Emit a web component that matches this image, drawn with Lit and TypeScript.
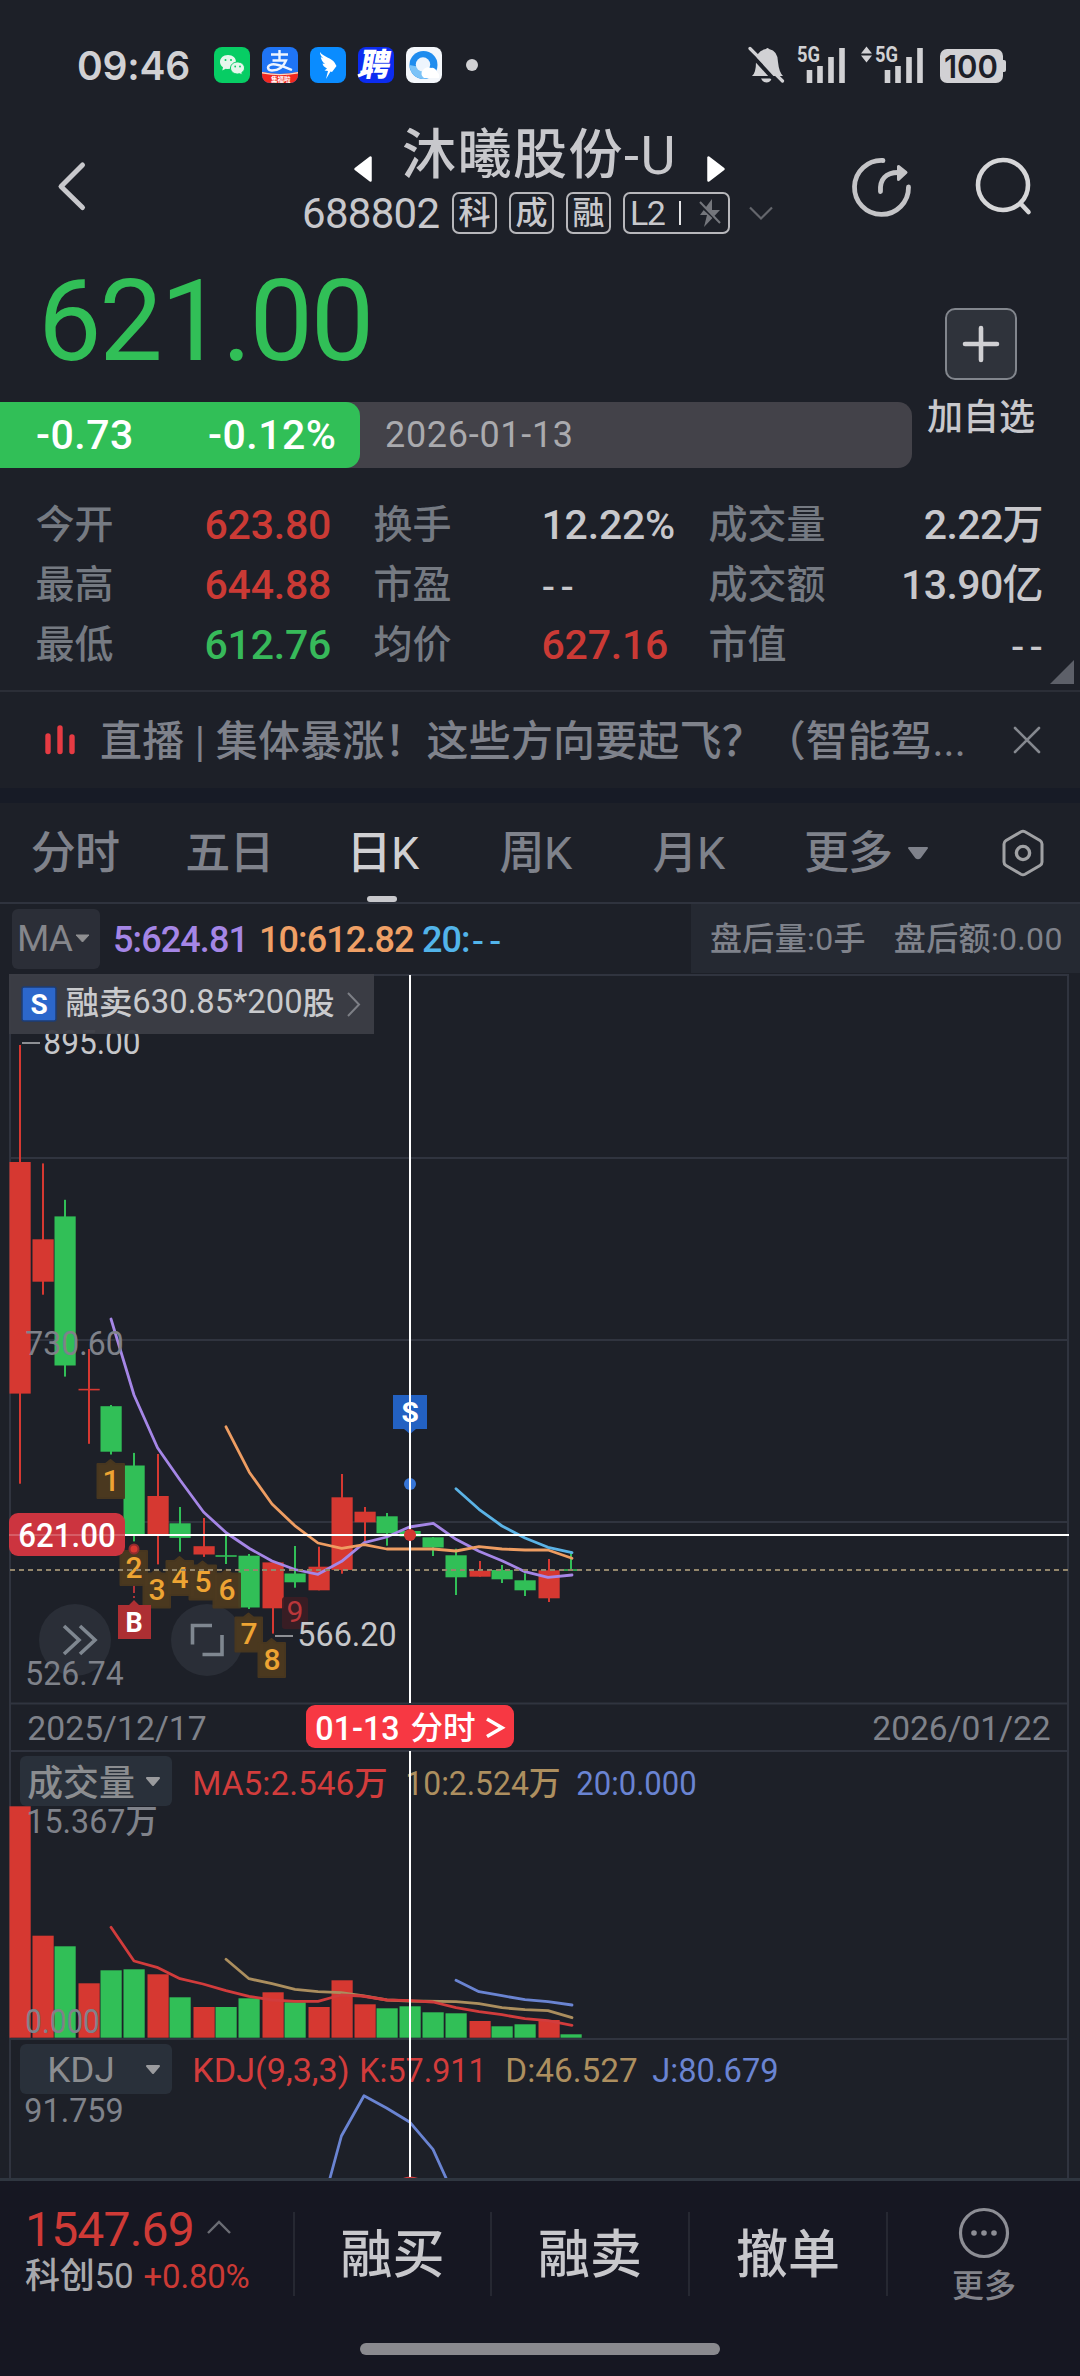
import { LitElement, html, svg, css } from "lit";
import { customElement } from "lit/decorators.js";

const RED = "#d63831";
const GREEN = "#31bf57";

type Candle = [cx: number, top: number, bottom: number, high: number, low: number, up: 0 | 1, vol: number];

// centre x, body top, body bottom, wick top, wick bottom, rising flag, volume bar top
const CANDLES: Candle[] = [
  [20, 1162, 1393.6, 1045, 1483.7, 1, 1806.3],
  [43, 1239.3, 1281.7, 1163.4, 1294.7, 1, 1935.7],
  [65, 1216.4, 1365.5, 1199.8, 1376.6, 0, 1946.3],
  [89, 1388.8, 1390.4, 1349, 1443.8, 1, 1983.3],
  [111, 1406.2, 1451.7, 1405, 1454.5, 0, 1970.3],
  [134, 1465.5, 1534, 1452.9, 1541.4, 0, 1969.3],
  [158, 1496, 1535.5, 1454, 1564.4, 1, 1974.3],
  [180, 1523.3, 1537.9, 1507, 1551.7, 0, 1997.3],
  [204, 1546.2, 1554.5, 1518, 1556.9, 1, 2007],
  [226, 1555.2, 1556.8, 1535.5, 1564, 0, 2007],
  [249, 1555.7, 1607.5, 1554, 1609, 0, 1998.3],
  [273, 1562.4, 1608.3, 1562.4, 1633.6, 1, 1992.3],
  [295, 1573.5, 1582.3, 1546, 1587.7, 0, 2002.3],
  [319, 1566.7, 1590.3, 1546.7, 1590.3, 1, 2007],
  [342, 1497.3, 1570, 1474, 1573.7, 1, 1980.3],
  [365, 1511.7, 1522.3, 1507, 1541.7, 1, 2004.3],
  [387, 1516.3, 1533.3, 1513, 1545.7, 0, 2008.3],
  [410, 1531, 1536.5, 1531, 1536.5, 0, 2006.3],
  [433, 1537.3, 1547.5, 1537, 1556, 0, 2012.3],
  [456, 1555.3, 1577.3, 1548.7, 1595, 0, 2013.3],
  [480, 1570.7, 1576.7, 1561, 1576.7, 1, 2021],
  [502, 1570, 1579.3, 1565, 1583, 0, 2026.3],
  [525, 1580.3, 1590.3, 1573.3, 1596, 0, 2024.3],
  [549, 1570.3, 1598.3, 1559, 1602, 1, 2020],
  [571, 1569.2, 1570.8, 1551, 1570, 0, 2034.3],
];

const LINES: [string, string][] = [
  ["#a586e6", "111,1319 134,1395 157.5,1447.7 180,1480 203.5,1512 226.5,1533 249.5,1548.5 272,1561 295,1569.5 318,1574.3 341.7,1561.3 364.3,1542.7 386.7,1537 409.3,1527 433.3,1523.3 456,1539.3 479,1551.3 502,1560.7 525,1571.7 548,1577.3 572,1575"],
  ["#ee9d62", "226,1426.8 249.3,1472.2 272,1504 294.7,1525.6 318,1543 341.7,1548.3 364.3,1544.7 386.7,1549 433.3,1549 456,1551 479,1546.7 502,1549 525,1550 548,1550 572,1558.3"],
  ["#5bb3e6", "456,1488.7 479,1509.3 502,1526 525,1538 548,1547.3 572,1552.7"],
  ["#ab8e5e", "226,1959.3 249,1978.7 272,1983.7 295,1989.3 318,1991.7 341,1992.7 364,1996 387,2000 410,2001 456,2001.7 479,2003.7 502,2007.7 525,2009.7 548,2010.7 572,2017.7"],
  ["#d23c3c", "111,1927.3 134,1961 157,1967.3 180,1978.7 203,1984 226,1990.7 249,1996.3 272,2000 295,2001.3 318,2001.3 341,1995 362,1996 387,2000 410,2000.7 433,2002 456,2007.7 479,2011.7 502,2014.7 525,2018.7 548,2020.7 572,2025.3"],
  ["#6a84d2", "456,1980.3 479,1991.7 502,1995.7 525,1999.7 548,2001.7 572,2005"],
  ["#6a84d2", "330,2178 341.4,2136 364,2095.7 386.5,2108 410,2122.3 433,2149.3 446,2178"],
];

const COUNTS: [string, number, number][] = [
  ["1", 111, 1480], ["2", 134, 1567], ["3", 157, 1589.5], ["4", 180, 1577],
  ["5", 203, 1581.5], ["6", 227, 1589.5], ["7", 249, 1633.5], ["8", 272, 1659],
];

/** Text spanning from left to right, centred vertically on cy. */
function label(left: number, right: number, cy: number, text: string, size: number, fill: string, weight = 450) {
  const pad = size * 0.05;
  return svg`<text x=${left - pad} y=${cy + size * 0.356} font-size=${size} font-weight=${weight} fill=${fill}
    textLength=${right - left + pad * 2} lengthAdjust="spacingAndGlyphs">${text}</text>`;
}

@customElement("stock-chart")
class StockChart extends LitElement {
  static styles = css`
    :host { display: block; }
    svg { display: block; }
    text { font-family: Roboto, "Noto Sans CJK SC", sans-serif; }
    .grid { stroke: #30343f; stroke-width: 2; fill: none; }
    .mid { text-anchor: middle; }
  `;

  private count([n, x, y]: [string, number, number]) {
    return svg`
      <path d="M${x - 13.5} ${y - 16}h8l5 -4l5 4h8.500v34h-26.500z" fill="#4d3a1f" stroke="#4a381f" stroke-width="2" stroke-linejoin="round" opacity=".94"/>
      <text class="mid" x=${x} y=${y + 10.5} font-size="30" font-weight="500" fill="#eea433">${n}</text>`;
  }

  render() {
    return html`
      <svg width="1080" height="1205" viewBox="0 973 1080 1205">
        <rect x="0" y="973" width="1080" height="1205" fill="#1d2028" />
        <path class="grid" d="M10 975H1069M10 974V2178M1068 974V2178M10 1158H1068M10 1340H1068M10 1522H1068M10 1703.5H1068M10 1751H1068M10 2039H1068" />
        <circle cx="75" cy="1640" r="36" fill="#2a2e37" />
        <circle cx="207" cy="1640" r="36" fill="#2a2e37" />

        ${CANDLES.map(([cx, top, bottom, high, low, up, vol]) => {
          const c = up ? RED : GREEN;
          return svg`
            <rect x=${cx - 1} y=${high} width="2" height=${low - high} fill=${c}/>
            <rect x=${cx - 10.5} y=${top} width="21.2" height=${bottom - top} fill=${c}/>
            <rect x=${cx - 10.5} y=${vol} width="21.2" height=${2037.7 - vol} fill=${c}/>`;
        })}

        ${LINES.map(([c, p]) => svg`<polyline points=${p} fill="none" stroke=${c} stroke-width="2.8" stroke-linejoin="round" stroke-linecap="round"/>`)}

        <path d="M134 1586V1602" stroke="#c0353a" stroke-width="1.8" stroke-dasharray="7 3 2 3" />
        ${COUNTS.map((c) => this.count(c))}
        <circle cx="134" cy="1549" r="4.5" fill="#d63831" stroke="#8f2b2e" stroke-width="2" />
        <path d="M10 1570H1068" stroke="#94866b" stroke-width="2" stroke-dasharray="5 4" />
        <rect x="282" y="1597" width="26" height="32" rx="3" fill="#3c1d23" opacity=".9" />
        <text class="mid" x="295" y="1622" font-size="30" font-weight="450" fill="#b9363a">9</text>
        <path d="M118 1605h11l5 -5l5 5h12v34h-33z" fill="#ad2f33" />
        <text class="mid" x="134" y="1632" font-size="27" font-weight="700" fill="#fff">B</text>

        ${label(27, 122, 1343, "730.60", 33, "#7f828a")}
        ${label(27, 122, 1673, "526.74", 33, "#7f828a")}
        <path d="M22 1043H40M275 1636H293" stroke="#8d8f94" stroke-width="2" />
        ${label(45, 139, 1042, "895.00", 33, "#c6c7ca")}
        ${label(299, 395, 1634.5, "566.20", 33, "#c6c7ca")}

        <g fill="none" stroke="#7f8790" stroke-width="3.6">
          <path d="M64 1626L79 1640L64 1654M80 1626L95 1640L80 1654" />
          <path d="M192.5 1644.5V1625.5H212M222 1635V1654.5H202.5" />
        </g>

        <path d="M393 1395h34v34h-11l-6 5l-6 -5h-11z" fill="#2361c2" />
        <text class="mid" x="410" y="1422" font-size="28" font-weight="700" fill="#fff">S</text>
        <circle cx="410" cy="1484" r="6" fill="#3775d6" />

        ${label(29, 205, 1727.5, "2025/12/17", 34, "#7f828a")}
        ${label(874, 1049, 1727.5, "2026/01/22", 34, "#7f828a")}

        <rect x="20" y="1756" width="152" height="50" rx="6" fill="#29303a" />
        ${label(29, 133, 1783.5, "成交量", 36, "#8b8d90")}
        <path d="M147 1778h12l-6 7z" fill="#9a9b9e" stroke="#9a9b9e" stroke-width="2" stroke-linejoin="round" />
        ${label(194, 386, 1783, "MA5:2.546万", 33, "#d23c3c")}
        ${label(407, 559, 1783, "10:2.524万", 33, "#ad8f5f")}
        ${label(578, 695, 1783, "20:0.000", 33, "#6a84d2")}
        ${label(28, 156, 1821.5, "15.367万", 33, "#7f828a")}
        ${label(27, 98, 2021.5, "0.000", 33, "#7f828a")}

        <rect x="20" y="2044" width="152" height="50" rx="6" fill="#29303a" />
        ${label(49, 113, 2069.5, "KDJ", 35, "#8b8d90")}
        <path d="M147 2066h12l-6 7z" fill="#9a9b9e" stroke="#9a9b9e" stroke-width="2" stroke-linejoin="round" />
        ${label(194, 348, 2070.5, "KDJ(9,3,3)", 33, "#d23c3c")}
        ${label(361, 485, 2070.5, "K:57.911", 33, "#d23c3c")}
        ${label(507, 636, 2070.5, "D:46.527", 33, "#ad8f5f")}
        ${label(654, 777, 2070.5, "J:80.679", 33, "#6a84d2")}
        ${label(26, 122, 2110, "91.759", 33, "#7f828a")}
        <path d="M403 2178q7 -3 15 0z" fill="#d23c3c" />

        <path d="M410 975V1703M410 1751V2177M125 1535H1069" stroke="#fff" stroke-width="2" />
        <circle cx="410" cy="1535" r="6" fill="#d43832" />
        <rect x="9" y="1513" width="116" height="43" rx="9" fill="#cc343f" />
        <path d="M9 1535H125" stroke="#fff" stroke-width="2" opacity=".2" />
        ${label(20, 114, 1535.5, "621.00", 33, "#fff", 500)}

        <rect x="306" y="1705" width="208" height="43" rx="9" fill="#f73843" />
        ${label(317, 398, 1728, "01-13", 33, "#fff", 500)}
        ${label(412, 474, 1727.5, "分时", 32, "#fff", 500)}
        <path d="M487 1719L502 1727.7L487 1736.5" fill="none" stroke="#fff" stroke-width="3.6" />

        <rect x="9" y="974" width="365" height="60" fill="#3b3d46" opacity=".96" />
        <rect x="22" y="987" width="34" height="34" rx="2" fill="#2c67cb" stroke="#1d3c74" stroke-width="1.5" />
        <text class="mid" x="39" y="1014" font-size="28" font-weight="700" fill="#fff">S</text>
        ${label(67, 131, 1003, "融卖", 32, "#c9cacd")}
        ${label(134, 301, 1001.5, "630.85*200", 33, "#c9cacd")}
        ${label(304, 333, 1003, "股", 31, "#c9cacd")}
        <path d="M348 993L359 1004.5L348 1016" fill="none" stroke="#7d7f86" stroke-width="2" />
      </svg>`;
  }
}

const STATS: [string, string, string][] = [
  ["今开", "623.80", "red"], ["换手", "12.22%", "pct"], ["成交量", "2.22万", "tight"],
  ["最高", "644.88", "red"], ["市盈", "--", "dash"], ["成交额", "13.90亿", "tight"],
  ["最低", "612.76", "green"], ["均价", "627.16", "red"], ["市值", "--", "dash"],
];

const bars = svg`<path d="M3 25v13M13.500 21v17M24.500 12v26M35.500 3v35" stroke="#d1d1d4" stroke-width="5.600"/>`;

@customElement("app-root")
class AppRoot extends LitElement {
  static styles = css`
    :host {
      display: block; width: 1080px; height: 2376px; overflow: hidden;
      background: #1d2028; color: #c8c8cc; position: relative;
      font-family: Roboto, "Noto Sans CJK SC", sans-serif; white-space: nowrap; font-weight: 450;
    }
    * { box-sizing: border-box; }
    svg { display: block; flex: none; overflow: visible; }
    .status { display: flex; height: 120px; padding: 10px 74px 0 77px; align-items: center; }
    .time { width: 137px; font: 600 39px/1 Inter, Roboto, sans-serif; color: #d1d1d4; letter-spacing: -0.2px; }
    .apps { display: flex; gap: 12px; flex: 1; align-items: center; }
    .dot { width: 12px; height: 12px; border-radius: 50%; background: #d1d1d4; margin-left: 12px; }
    .cjk { font-family: "Noto Sans CJK SC", sans-serif; }
    .head { display: grid; grid-template-columns: 300px 552px 1fr; height: 130px; }
    .back { padding: 40px 0 0 56px; }
    .trow { display: flex; height: 66px; padding-left: 54px; align-items: center; }
    .tri { margin-top: 32px; }
    .title { font-size: 54px; line-height: 66px; width: 275px; margin: 0 30px; padding-top: 5px; letter-spacing: 1.5px; }
    .crow { display: flex; height: 54px; padding-left: 2px; align-items: center; }
    .code { width: 150px; font-size: 42px; letter-spacing: -0.7px; }
    .tag { width: 45px; height: 42px; margin-right: 12px; border: 2px solid #b7b7bb; border-radius: 7px;
      font-size: 32px; line-height: 38px; text-align: center; }
    .l2 { width: 107px; display: flex; padding: 0 7px 0 5px; margin-right: 19px; align-items: center; font-size: 34px; letter-spacing: -1.500px; }
    .l2 svg { margin-left: auto; }
    .sep { width: 2px; height: 24px; background: #e4e4e6; margin-left: 15px; }
    .tools { display: flex; gap: 63px; padding-top: 37px; }
    .quote { display: grid; grid-template-columns: 912px 1fr; height: 245px; }
    .price { height: 152px; padding: 2px 0 0 38px; font-size: 113px; line-height: 140px; color: #31bf57; letter-spacing: -2.2px; }
    .strip { display: flex; height: 66px; background: #434249; border-radius: 0 14px 14px 0; line-height: 66px; }
    .chg { display: flex; width: 360px; padding-left: 36px; background: #31bf57; border-radius: 0 14px 14px 0;
      color: #fff; font-size: 41px; font-weight: 500; letter-spacing: 0.5px; }
    .chg span:first-child { width: 172px; }
    .date { padding-left: 25px; font-size: 36px; color: #aaaaae; letter-spacing: 0.7px; }
    .add { display: flex; flex-direction: column; align-items: center; padding: 58px 30px 0 0; font-size: 36px; line-height: 77px; }
    .plus { width: 72px; height: 72px; border: 2px solid #82868d; border-radius: 10px; background: #2f333b; }
    .stats { display: grid; grid-template-columns: 169px 169px 168px 167px 140px 1fr; grid-auto-rows: 60px; height: 195px;
      padding: 0 37px 0 35.500px; line-height: 61px; font-size: 41px; position: relative; }
    .k { font-size: 39px; color: #757a82; }
    .v { font-weight: 500; letter-spacing: -0.2px; }
    .v:nth-child(6n) { text-align: right; }
    .red { color: #cb3a35; } .green { color: #37b95a; }
    .v.tight { letter-spacing: -0.6px; }
    .v.dash { letter-spacing: 5px; font-family: "Liberation Sans", sans-serif; font-weight: 400; }
    .v.dash:nth-child(6n) { margin-right: -5px; }
    .corner { position: absolute; left: 1050px; top: 165px; }
    .news { display: flex; height: 98px; border-top: 2px solid #2b2e37; align-items: center; padding-left: 44px; font-size: 42px; color: #7f828b; }
    .news span { margin-left: 24px; width: 914px; padding-bottom: 5px; letter-spacing: 0.15px; }
    .band { height: 15px; background: #171b26; }
    .tabs { position: relative; display: flex; height: 101px; border-bottom: 2px solid #2f333e; align-items: center; font-size: 45px; line-height: 60px; color: #7f828b; }
    .tab, .more { padding-top: 3px; }
    .tab { width: 153px; text-align: center; letter-spacing: -0.7px; }
    .tab:first-child { text-indent: -3px; }
    .on { color: #d0d0d3; }
    .bar { position: absolute; left: 367px; top: 93px; width: 30px; height: 6px; border-radius: 3px; background: #c8c8cc; }
    .more { margin-left: 39px; width: 103px; letter-spacing: -1px; }
    .gear { margin-left: 73px; }
    .ma { display: flex; height: 69px; align-items: center; padding-left: 12px; font-size: 36px; letter-spacing: -0.9px; }
    .mabtn { display: flex; align-items: center; gap: 3px; width: 88px; height: 60px; padding-left: 5px; border-radius: 6px;
      background: #2b2e37; color: #85868b; font-size: 37px; margin-right: 13px; }
    .m5, .m10, .m20 { padding-top: 2px; font-weight: 500; }
    .m5 { color: #a586e6; width: 146px; } .m10 { color: #f0a066; width: 163px; } .m20 { color: #52b4ea; width: 269px; }
    .m20 b { font: 400 37px/1 "Liberation Sans", sans-serif; letter-spacing: 5px; margin-left: 2px; }
    .after { display: flex; flex: 1; height: 69px; line-height: 70px; background: #252932; padding-left: 19px; gap: 28px;
      font-size: 32px; color: #7f828b; letter-spacing: 0.35px; }
    .foot { display: grid; grid-template-columns: 293px 197px 198px 198px 194px; height: 198px; border-top: 3px solid #2f3640; background: #161722; position: relative; }
    .idx { padding: 25px 0 0 25px; }
    .big { display: flex; height: 48px; line-height: 48px; font-size: 48px; color: #cf3a36; letter-spacing: -0.8px; gap: 12px; align-items: center; }
    .big svg { margin-top: -6px; }
    .small { display: flex; height: 44px; line-height: 45px; font-size: 35px; gap: 10px; color: #a8a8ac; letter-spacing: -0.2px; }
    .small .red { font-size: 33px; }
    .act { height: 84px; margin-top: 31px; border-left: 2px solid #262832; line-height: 87px; font-size: 52px; font-weight: 500; text-align: center; }
    .act.last { font-size: 32px; font-weight: 450; color: #83848b; line-height: 40px; display: flex; flex-direction: column; align-items: center; gap: 7px; }
    .act.last svg { margin-top: -5px; }
    .home { position: absolute; left: 360px; top: 162px; width: 360px; height: 12px; border-radius: 6px; background: #8a8a8f; }
  `;

  render() {
    return html`
      <div class="status">
        <div class="time">09:46</div>
        <div class="apps">
          <svg width="36" height="36" viewBox="0 0 36 36">
            <rect width="36" height="36" rx="8" fill="#07cd64" />
            <path d="M14 8C9 8 6 11.300 6 15c0 2.200 1.200 4 3 5.300L8.300 23.400l3.400-1.700c.8.2 1.500.3 2.300.3 5 0 8-3.100 8-7s-3-7-8-7z" fill="#e6f7ec" />
            <path d="M23.500 15c-4 0-7 2.700-7 6s3 6 7 6c.8 0 1.500-.1 2.200-.3l2.700 1.400-.6-2.500c1.700-1.100 2.700-2.700 2.700-4.600 0-3.300-3-6-7-6z" fill="#e6f7ec" stroke="#07cd64" />
            <g fill="#07cd64"><circle cx="11.500" cy="13" r="1" /><circle cx="17" cy="13" r="1" /><circle cx="21.200" cy="19.500" r=".9" /><circle cx="26" cy="19.500" r=".9" /></g>
          </svg>
          <svg width="36" height="36" viewBox="0 0 36 36">
            <clipPath id="r"><rect width="36" height="36" rx="8" /></clipPath>
            <g clip-path="url(#r)">
              <rect width="36" height="36" fill="#1f74f5" />
              <path d="M0 25q18 4 36 0v12H0z" fill="#f2281e" /><path d="M0 25q18 4 36 0v1.500q-18 3.500 -36 0z" fill="#fbd9c0" />
              <path d="M9 7.500H26M17.500 3V13M10.500 13.500H24C21 21 15 23.500 10 23.500C6 23.500 4.500 20 8 18C13 15.500 22 20 30 23" fill="none" stroke="#eef4ff" stroke-width="2.400" />
              <text class="cjk" x="9" y="34.500" font-size="6.500" font-weight="700" fill="#fff">集福啦</text>
            </g>
          </svg>
          <svg width="36" height="36" viewBox="0 0 36 36">
            <rect width="36" height="36" rx="8" fill="#0a8cff" />
            <path d="M10 5C13 10 22 11 24.500 15.500L26.500 19L22 25L20.500 24.500L16 32L18 24L14.500 23.500L17 21.500C14 20 13 18.500 12.500 16.500L15 17C12 14.500 11 12 10.800 10L13.500 11.500C10.500 9 10 7 10 5z" fill="#fff" />
          </svg>
          <svg width="36" height="36" viewBox="0 0 36 36">
            <rect width="36" height="36" rx="8" fill="#0c2cf0" />
            <text class="cjk" x="2" y="29" font-size="32" font-weight="800" fill="#fff" transform="skewX(-10) translate(4 0)" textLength="30" lengthAdjust="spacingAndGlyphs">聘</text>
            <path d="M0 29L12 24" stroke="#fff" stroke-width="3" />
          </svg>
          <svg width="36" height="36" viewBox="0 0 36 36">
            <rect width="36" height="36" rx="8" fill="#f4f7fb" />
            <circle cx="17.500" cy="18" r="14" fill="#1f8cee" />
            <path d="M3.500 18a14 14 0 0 0 20 12.600L14 20z" fill="#7cc3f7" />
            <circle cx="17" cy="17.500" r="7.200" fill="#eef5fd" />
            <path d="M18 31a5 5 0 0 1 -1-8a6 6 0 0 1 8-2a5 5 0 0 1 6 4q3 2 2 6z" fill="#fff" />
          </svg>
          <div class="dot"></div>
        </div>
        <svg width="257" height="40" viewBox="749 45 257 40" fill="#d1d1d4">
          <path d="M752 76q4-3 4-14q0-11 10-13q1.500-2 3 0q9 2 9 13q1 10 5 14zM761 78.500h11q-2 4-5.500 4t-5.500-4z" />
          <path d="M748 51L779 85" stroke="#1d2028" stroke-width="4" /><path d="M750 48.500L782.500 81" stroke="#d1d1d4" stroke-width="3.200" stroke-linecap="round" />
          <text x="797" y="62" font-size="22" font-weight="700" textLength="23" lengthAdjust="spacingAndGlyphs">5G</text>
          <g transform="translate(806.500 45)">${bars}</g>
          <path d="M861 53.500l5.500-7l5.500 7zM861 55.500l5.500 7l5.500-7z" />
          <text x="875" y="62" font-size="22" font-weight="700" textLength="23" lengthAdjust="spacingAndGlyphs">5G</text>
          <g transform="translate(884.500 45)">${bars}</g>
          <rect x="940" y="49" width="63" height="34" rx="7" /><rect x="1000" y="60" width="6" height="12" rx="2" />
          <text x="944" y="77.500" font-size="31" font-weight="600" fill="#1d2028" font-family="Inter" textLength="54" lengthAdjust="spacingAndGlyphs">100</text>
        </svg>
      </div>

      <div class="head">
        <div class="back">
          <svg width="30" height="52" viewBox="0 0 30 52" fill="none" stroke="#c8c8cc" stroke-width="5" stroke-linecap="round" stroke-linejoin="round"><path d="M26.500 5L5 26.500L26.500 47.500" /></svg>
        </div>
        <div>
          <div class="trow">
            <svg class="tri" width="18" height="26" viewBox="0 0 18 26"><path d="M16.500 1.500V24.500L1.500 13z" fill="#fff" stroke="#fff" stroke-width="2.500" stroke-linejoin="round" /></svg>
            <div class="title">沐曦股份-U</div>
            <svg class="tri" width="18" height="26" viewBox="0 0 18 26"><path d="M1.500 1.500V24.500L16.500 13z" fill="#fff" stroke="#fff" stroke-width="2.500" stroke-linejoin="round" /></svg>
          </div>
          <div class="crow">
            <div class="code">688802</div>
            <div class="tag">科</div><div class="tag">成</div><div class="tag">融</div>
            <div class="tag l2"><span>L2</span><div class="sep"></div>
              <svg width="22" height="28" viewBox="0 0 22 28"><path d="M13 0L1 16h7L5 28L21 11h-8z" fill="#74767c" /><path d="M-1 4L22 25" stroke="#1d2028" stroke-width="3" /><path d="M1 3L21 24" stroke="#74767c" stroke-width="2" /></svg>
            </div>
            <svg width="24" height="14" viewBox="0 0 24 14"><path d="M1 1.500L12 12.500L23 1.500" fill="none" stroke="#64666c" stroke-width="2.200" /></svg>
          </div>
        </div>
        <div class="tools">
          <svg width="60" height="60" viewBox="0 0 60 60" fill="none" stroke="#c4c4c7" stroke-width="4.800" stroke-linecap="round">
            <path d="M31 3.500A27 27 0 1 0 56.500 30" /><path d="M28.500 34.500C27.500 22 34 15.500 46 15.500" />
            <path d="M46.500 9.500V22.500L54 15.500z" fill="#c4c4c7" stroke-width="3" stroke-linejoin="round" />
          </svg>
          <svg width="60" height="60" viewBox="0 0 60 60" fill="none" stroke="#d6d6d8" stroke-width="4.600" stroke-linecap="round">
            <circle cx="28" cy="28" r="25" /><path d="M46 47L53.500 55" />
          </svg>
        </div>
      </div>

      <div class="quote">
        <div>
          <div class="price">621.00</div>
          <div class="strip"><div class="chg"><span>-0.73</span><span>-0.12%</span></div><div class="date">2026-01-13</div></div>
        </div>
        <div class="add">
          <div class="plus"><svg width="68" height="68" viewBox="0 0 68 68"><path d="M18 34H50M34 18V50" stroke="#d0d0d3" stroke-width="4.600" stroke-linecap="round" /></svg></div>
          <div>加自选</div>
        </div>
      </div>

      <div class="stats">
        ${STATS.map(([k, v, c]) => html`<div class="k">${k}</div><div class="v ${c}">${v}</div>`)}
        <svg class="corner" width="24" height="24" viewBox="0 0 24 24"><path d="M24 0V24H0z" fill="#5d6069" /></svg>
      </div>

      <div class="news">
        <svg width="32" height="30" viewBox="0 0 32 30"><path d="M4 11V26.500M16 3V26.500M28 12V26.500" stroke="#e63b43" stroke-width="5.400" stroke-linecap="round" /></svg>
        <span>直播 | 集体暴涨！这些方向要起飞？（智能驾...</span>
        <svg width="26" height="26" viewBox="0 0 26 26"><path d="M1 1L25 25M25 1L1 25" stroke="#85888f" stroke-width="2.600" stroke-linecap="round" /></svg>
      </div>
      <div class="band"></div>
      <div class="tabs">
        <div class="tab">分时</div><div class="tab">五日</div><div class="tab on">日K</div><div class="tab">周K</div><div class="tab">月K</div>
        <div class="more">更多</div>
        <svg width="22" height="16" viewBox="0 0 22 16"><path d="M2 3H20L13 12.500Q11 14 9 12.500z" fill="#7f828b" stroke="#7f828b" stroke-width="2" stroke-linejoin="round" /></svg>
        <svg class="gear" width="42" height="48" viewBox="0 0 42 48" fill="none" stroke="#a0a1a4" stroke-width="3"><path d="M19 2.800Q21 1.700 23 2.800L38 11.500Q40 12.700 40 15V33Q40 35.300 38 36.500L23 45.200Q21 46.300 19 45.200L4 36.500Q2 35.300 2 33V15Q2 12.700 4 11.500z" /><circle cx="21" cy="24" r="6.600" stroke-width="3.400" /></svg>
        <div class="bar"></div>
      </div>
      <div class="ma">
        <div class="mabtn"><span>MA</span><svg width="15" height="9" viewBox="0 0 15 9"><path d="M1 1H14L7.500 8z" fill="#8f8f91" stroke="#8f8f91" stroke-linejoin="round" /></svg></div>
        <div class="m5">5:624.81</div><div class="m10">10:612.82</div><div class="m20">20:<b>--</b></div>
        <div class="after"><span>盘后量:0手</span><span>盘后额:0.00</span></div>
      </div>

      <stock-chart></stock-chart>

      <div class="foot">
        <div class="idx">
          <div class="big">1547.69<svg width="26" height="14" viewBox="0 0 26 14"><path d="M2 13L13 2L24 13" fill="none" stroke="#6b6d74" stroke-width="2.400" /></svg></div>
          <div class="small"><span>科创50</span><span class="red">+0.80%</span></div>
        </div>
        <div class="act">融买</div><div class="act">融卖</div><div class="act">撤单</div>
        <div class="act last">
          <svg width="52" height="52" viewBox="0 0 52 52"><circle cx="26" cy="26" r="23.500" fill="none" stroke="#8d8e95" stroke-width="3.200" /><g fill="#8d8e95"><circle cx="16" cy="26" r="2.800" /><circle cx="26" cy="26" r="2.800" /><circle cx="36" cy="26" r="2.800" /></g></svg>
          <div>更多</div>
        </div>
        <div class="home"></div>
      </div>`;
  }
}
